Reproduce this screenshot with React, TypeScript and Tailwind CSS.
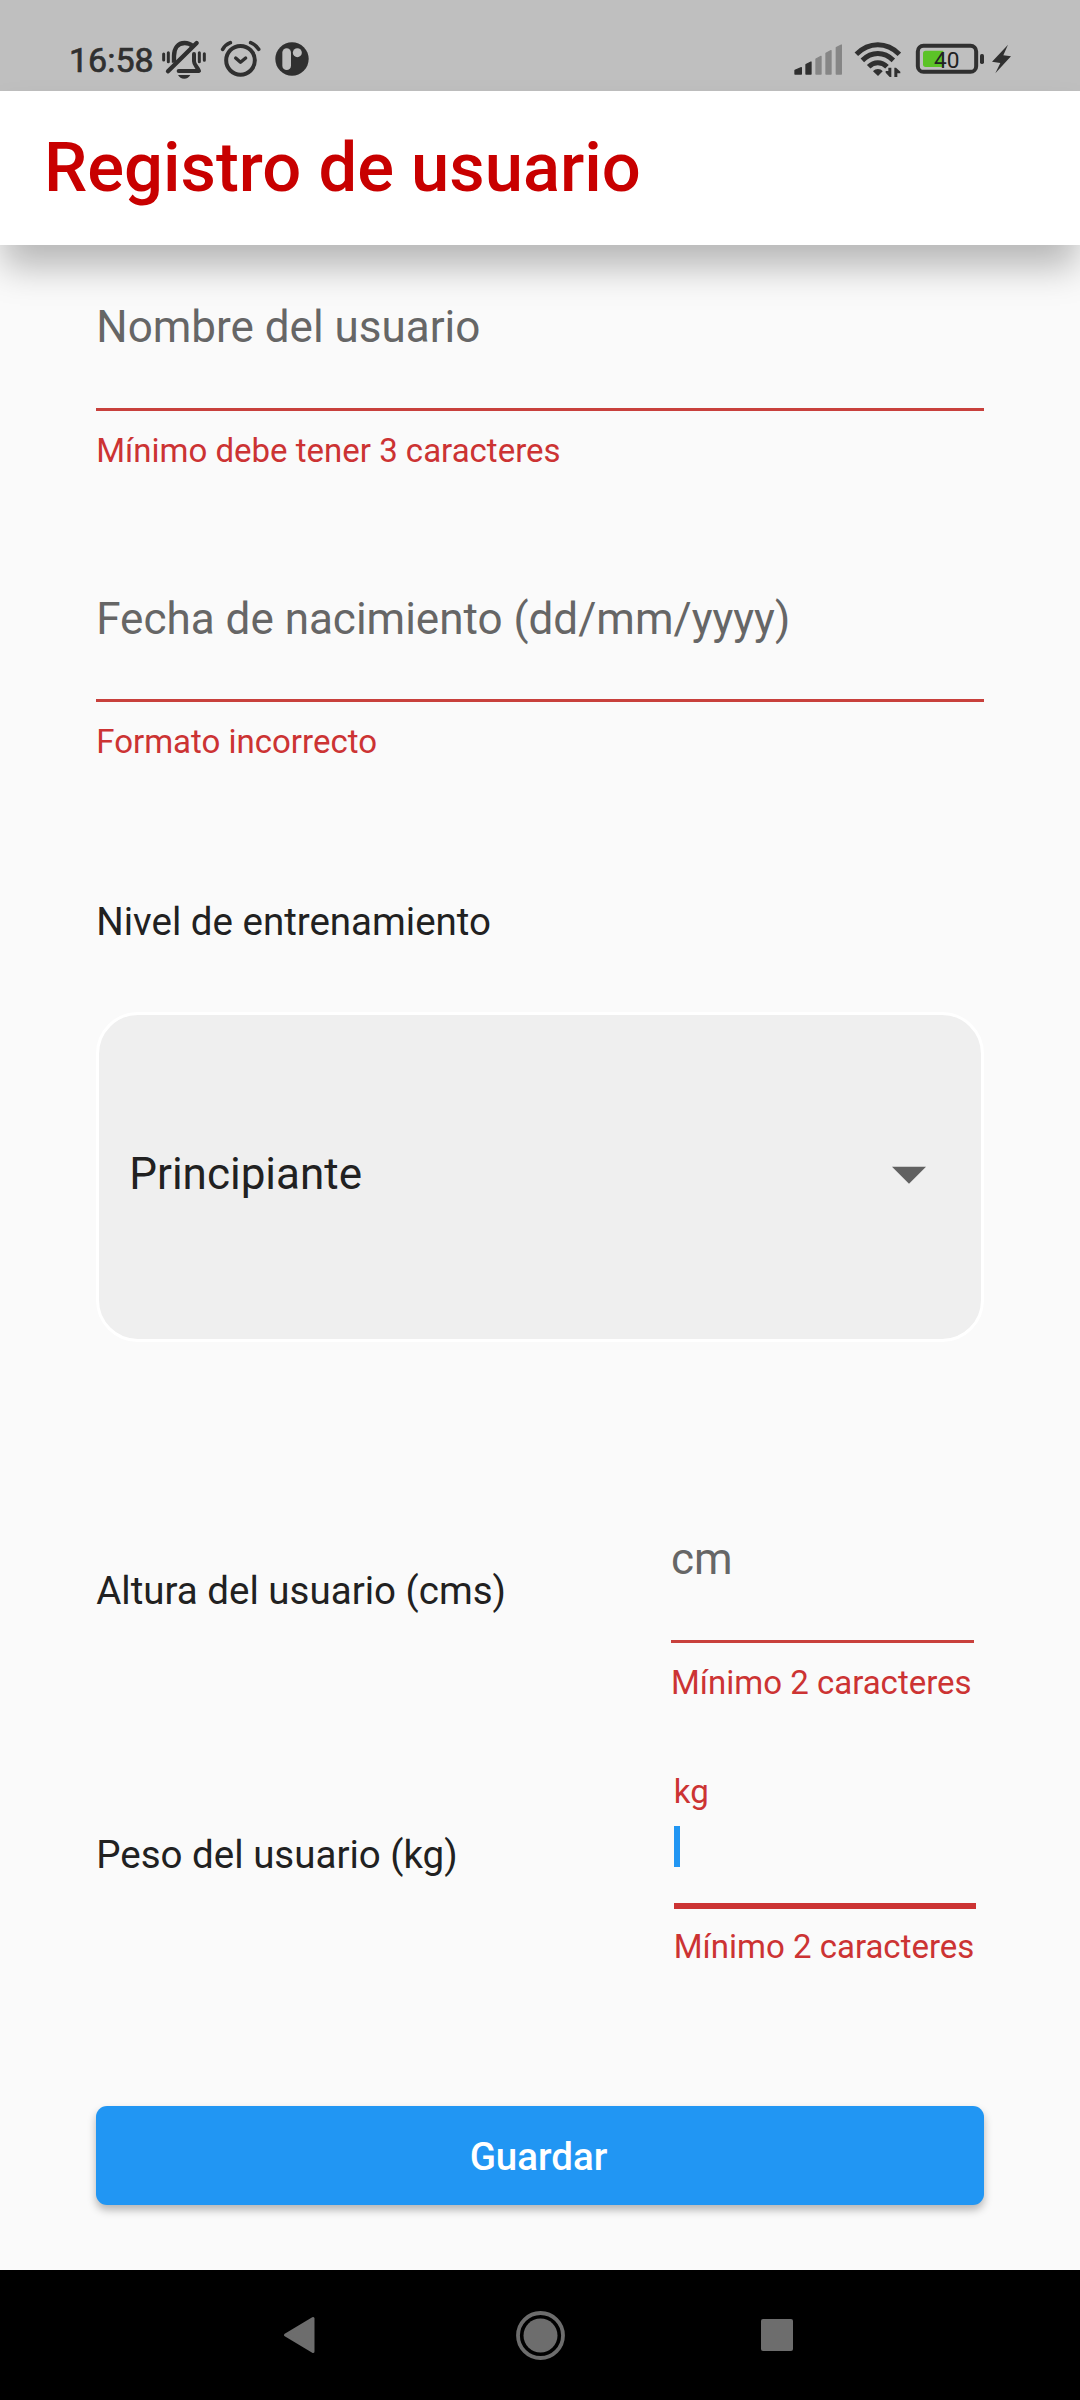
import type { ReactNode } from "react";

const INK = "#303030";
const FAINT = "#868686";

function BellOffIcon() {
  return (
    <svg className="mt-[39px] h-[41px] w-12" viewBox="330 57 144 123" fill="none" stroke={INK} strokeLinecap="round">
      <path d="M372 128V108C372 84 384 69 404 69C414 69 421 72 428 78" strokeWidth="13" strokeLinecap="butt" />
      <path d="M432 102V124C432 135 442 140 447 153H386" strokeWidth="12" strokeLinejoin="round" />
      <path d="M354 154L440 69" strokeWidth="13" />
      <path d="M341 102V120M355 98V125M448 98V125M463 101V121" strokeWidth="9" />
      <path d="M384 165H421C417 172 411 176 402.500 176C394 176 388 172 384 165Z" fill={INK} stroke="none" />
    </svg>
  );
}

function AlarmIcon() {
  return (
    <svg className="mt-[39px] ml-3 h-[39px] w-[41px]" viewBox="510 57 123 117" fill="none" stroke={INK} strokeLinecap="round" strokeLinejoin="round">
      <circle cx="571.500" cy="121" r="43" strokeWidth="12" />
      <path d="M557 114L571.500 127L587 114" strokeWidth="10" />
      <path d="M518 88C523 79 531 72 541 68M602 68C612 72 620 79 626 88" strokeWidth="11" />
    </svg>
  );
}

function AppBadgeIcon() {
  return (
    <svg className="mt-[42px] ml-[14px] h-[34px] w-[34px]" viewBox="675 66 102 102">
      <circle cx="726" cy="117" r="50" fill={INK} />
      <rect x="697" y="85" width="26" height="65" rx="13" fill="#bfbfbf" />
      <circle cx="742" cy="98" r="13.500" fill="#bfbfbf" />
    </svg>
  );
}

function SignalIcon() {
  return (
    <svg className="mt-[42px] h-[35px] w-[50px]" viewBox="39 66 150 105" strokeWidth="4" strokeLinejoin="round">
      <path d="M45 162V151L64 143V162Z" fill={INK} stroke={INK} />
      <path d="M78 162V134L93 126V162Z" fill={INK} stroke={INK} />
      <path d="M108 162V117L123 109V162Z" fill={FAINT} stroke={FAINT} />
      <path d="M138 162V100L153 92V162Z" fill={FAINT} stroke={FAINT} />
      <path d="M169 162V83L184 75V162Z" fill={FAINT} stroke={FAINT} />
    </svg>
  );
}

function WifiIcon() {
  return (
    <svg className="mt-[40px] ml-[11px] h-[39px] w-[47px]" viewBox="222 60 141 117" fill="none" stroke={INK}>
      <path d="M229 103C267 65 320 65 358 103" strokeWidth="15" />
      <path d="M247 121C275 94 312 94 340 121" strokeWidth="15" />
      <path d="M266 140C282 124 305 124 321 140" strokeWidth="15" />
      <path d="M279 154C287 145 301 145 308 154L294 168Z" fill={INK} stroke="none" />
      <path d="M334 143V171H329L317 158V153H325V143ZM343 171V143H348L361 155V160H352V171Z" fill={INK} stroke="none" />
    </svg>
  );
}

function BatteryIcon() {
  return (
    <svg className="mt-[43px] ml-[14px] h-8 w-[70px]" viewBox="405 69 210 96">
      <rect x="413.500" y="77.500" width="175" height="78" rx="17" fill="none" stroke={INK} strokeWidth="12" />
      <path d="M437 92H490V141H437Q429 141 429 133V100Q429 92 437 92Z" fill="#5cc327" />
      <rect x="600" y="102" width="12" height="30" rx="5" fill={INK} />
      <text x="462" y="144" fontSize="68" fill="#222222" className="font-[Roboto]">40</text>
    </svg>
  );
}

function BoltIcon() {
  return (
    <svg className="mt-[43px] ml-[6px] h-8 w-[21px]" viewBox="633 69 63 96">
      <path d="M684 74L636 125L661 129L646 160L693 109L670 106Z" fill={INK} />
    </svg>
  );
}

function StatusBar() {
  return (
    <div className="flex h-[91px] items-start bg-[#bfbfbf] pr-[68px] pl-[69px]">
      <span className="mt-10 w-[91px] text-[34px] leading-10 text-[#303030] [-webkit-text-stroke:0.7px_#303030]">16:58</span>
      <BellOffIcon />
      <AlarmIcon />
      <AppBadgeIcon />
      <div className="ml-auto flex items-start">
        <SignalIcon />
        <WifiIcon />
        <BatteryIcon />
        <BoltIcon />
      </div>
    </div>
  );
}

function Label({ children }: { children: ReactNode }) {
  return <span className="block text-[38.5px] leading-[45px] whitespace-nowrap text-[#212121]">{children}</span>;
}

function ErrorText({ children }: { children: ReactNode }) {
  return <p className="text-[33px] leading-[39px] whitespace-nowrap text-[#cc3333]">{children}</p>;
}

function Field({ label, error, labelHeight = "h-[107px]" }: { label: string; error: string; labelHeight?: string }) {
  return (
    <div>
      <div className={`${labelHeight} text-[44px] leading-[52px] whitespace-nowrap text-[#666666]`}>{label}</div>
      <div className="mb-5 h-[3px] bg-[#c8403c]" />
      <ErrorText>{error}</ErrorText>
    </div>
  );
}

export default function App() {
  return (
    <div className="flex h-[2400px] w-[1080px] flex-col overflow-hidden bg-[#fafafa] font-[Roboto,sans-serif]">
      <StatusBar />
      <header className="relative h-[154px] bg-white pt-9 pl-11 shadow-[0_25px_34px_-3px_rgba(0,0,0,0.27)]">
        <h1 className="text-[68.75px] leading-[81px] font-medium text-[#c80000]">Registro de usuario</h1>
      </header>

      <main className="relative flex-1 px-[96.25px] pt-[56px]">
        <Field label="Nombre del usuario" error="Mínimo debe tener 3 caracteres" />
        <div className="mt-[123px]">
          <Field label="Fecha de nacimiento (dd/mm/yyyy)" error="Formato incorrecto" labelHeight="h-[106px]" />
        </div>

        <div className="mt-[138px]">
          <Label>Nivel de entrenamiento</Label>
        </div>

        <div className="mt-[68px] flex h-[330px] items-start justify-between rounded-[42px] border-[3px] border-white bg-[#efefef] pr-[54.5px] pl-[30px]">
          <span className="mt-[133px] text-[44px] leading-[52px] text-[#212121]">Principiante</span>
          <svg className="mt-[151px] h-[18px] w-[34px]" viewBox="0 0 34 18">
            <path d="M0 .7H34L17 17.700Z" fill="#616161" />
          </svg>
        </div>

        <div className="mt-[191px] flex items-start justify-between pr-[10.250px]">
          <div className="mt-[35px]">
            <Label>Altura del usuario (cms)</Label>
          </div>
          <div className="w-[302.500px]">
            <Field label="cm" error="Mínimo 2 caracteres" />
          </div>
        </div>

        <div className="mt-[70px] flex items-start justify-between pr-[7.500px]">
          <div className="mt-[60px]">
            <Label>Peso del usuario (kg)</Label>
          </div>
          <div className="w-[302.500px]">
            <ErrorText>kg</ErrorText>
            <div className="mt-[15px] h-[41px] w-[6px] bg-[#2196f3]" />
            <div className="mt-9 mb-[18px] h-[6px] bg-[#cc3333]" />
            <ErrorText>Mínimo 2 caracteres</ErrorText>
          </div>
        </div>

        <button className="mt-[140px] block h-[99px] w-full rounded-[11px] bg-[#2196f3] pt-[2px] pr-[3px] text-[38.5px] leading-[45px] font-medium text-white shadow-[0_5px_8px_0_rgba(0,0,0,0.28)]">
          Guardar
        </button>
      </main>

      <nav className="flex h-[130px] items-center bg-black pl-[283px]">
        <svg className="h-[38px] w-8" viewBox="0 0 32 38">
          <path d="M30 2.500V35.500L2.500 19Z" fill="#6d6d6d" stroke="#6d6d6d" strokeWidth="3" strokeLinejoin="round" />
        </svg>
        <svg className="ml-[200px] h-[50px] w-[50px]" viewBox="0 0 50 50">
          <circle cx="25.500" cy="25.500" r="22.500" fill="none" stroke="#6d6d6d" strokeWidth="3.800" />
          <circle cx="25.500" cy="25.500" r="17" fill="#6d6d6d" />
        </svg>
        <div className="ml-[196px] h-8 w-8 rounded-[2px] bg-[#6d6d6d]" />
      </nav>
    </div>
  );
}
